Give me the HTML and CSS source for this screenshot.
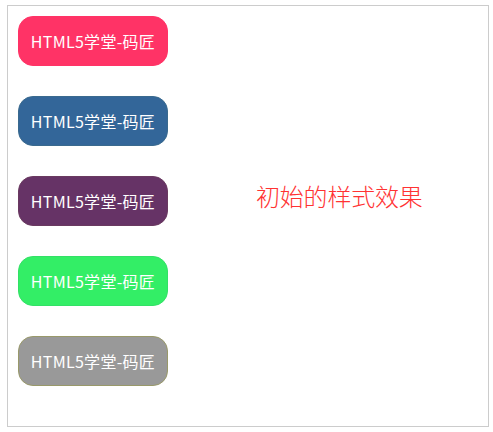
FILE: index.html
```html
<!DOCTYPE html>
<html lang="zh">
<head>
<meta charset="utf-8">
<link rel="stylesheet" href="styles.css">
</head>
<body>
<div class="box">
  <div class="list">
    <div class="btn pink">HTML5学堂-码匠</div>
    <div class="btn blue">HTML5学堂-码匠</div>
    <div class="btn purple">HTML5学堂-码匠</div>
    <div class="btn green">HTML5学堂-码匠</div>
    <div class="btn gray">HTML5学堂-码匠</div>
  </div>
  <div class="label">初始的样式效果</div>
</div>
</body>
</html>
```
FILE: styles.css
```css
html, body { margin: 0; padding: 0; background: #fff; }
body { padding: 5px 0 0 7px; font-family: "Noto Sans CJK SC", "Noto Sans", sans-serif; }
.box {
  width: 480px;
  height: 420px;
  border: 1px solid #cccccc;
  display: flex;
  align-items: flex-start;
}
.list {
  display: flex;
  flex-direction: column;
  gap: 30px;
  padding: 10px 0 0 10px;
}
.btn {
  box-sizing: border-box;
  width: 150px;
  height: 50px;
  border-radius: 15px;
  border: 1px solid;
  color: #fff;
  font-size: 16px;
  display: flex;
  align-items: center;
  justify-content: center;
  letter-spacing: 0.3px;
}
.pink { background: #ff3366; border-color: #ff3366; }
.blue { background: #336699; border-color: #3a6a8e; }
.purple { background: #663366; border-color: #6a3a60; }
.green { background: #33ee66; border-color: #33e066; }
.gray { background: #999999; border-color: #99996a; }
.label {
  margin: 174px 0 0 88px;
  color: #ff3333;
  font-size: 24px;
  font-weight: 300;
  line-height: 32px;
  letter-spacing: -0.2px;
}
```
